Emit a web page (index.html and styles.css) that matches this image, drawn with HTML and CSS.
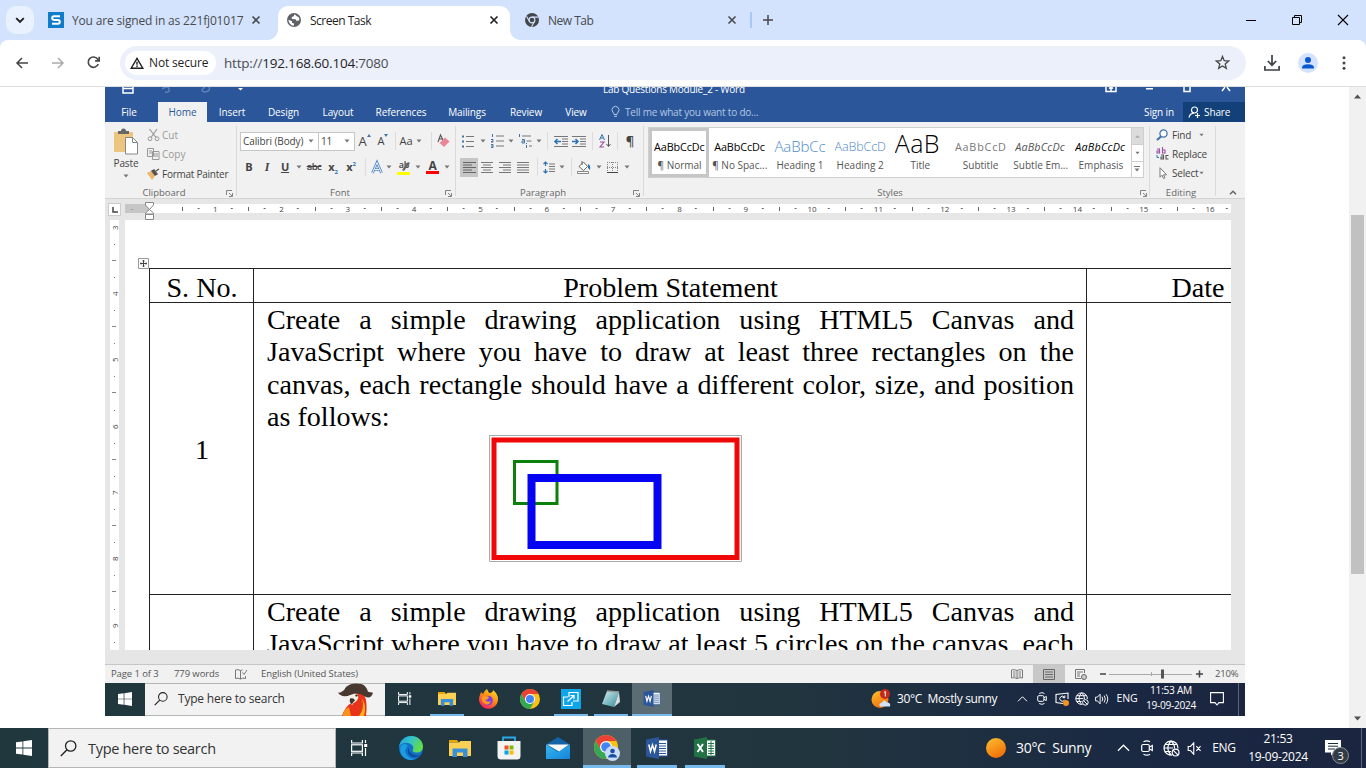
FILE: index.html
```html
<!DOCTYPE html>
<html lang="en">
<head>
<meta charset="utf-8">
<title>Screen Task</title>
<link rel="stylesheet" href="styles.css">
</head>
<body>
<svg class="defs" aria-hidden="true">
  <defs>
    <linearGradient id="gSun" x1="0" y1="0" x2=".5" y2="1"><stop offset="0" stop-color="#fbc02d"/><stop offset="1" stop-color="#f2720c"/></linearGradient>
    <linearGradient id="gEdge" x1="0" y1="0" x2="1" y2=".4"><stop offset="0" stop-color="#1e9de0"/><stop offset=".5" stop-color="#34c3c8"/><stop offset="1" stop-color="#62dc4a"/></linearGradient>
    <linearGradient id="gFox" x1=".8" y1="0" x2=".2" y2="1"><stop offset="0" stop-color="#ffe226"/><stop offset=".45" stop-color="#ff8a16"/><stop offset="1" stop-color="#f5156c"/></linearGradient>
    <linearGradient id="gMail" x1="0" y1="0" x2="1" y2="1"><stop offset="0" stop-color="#35b8f1"/><stop offset="1" stop-color="#1583d8"/></linearGradient>
    <linearGradient id="gNote" x1="0" y1="0" x2="1" y2="1"><stop offset="0" stop-color="#d9eef0"/><stop offset="1" stop-color="#2f8c9c"/></linearGradient>
  </defs>
  <symbol id="x" viewBox="0 0 10 10"><path d="M1.500 1.500l7 7M8.500 1.500l-7 7" fill="none" stroke="currentColor" stroke-width="1.600"/></symbol>
  <symbol id="caret" viewBox="0 0 6 4"><path d="M.5.500h5L3 3.500z" fill="#777"/></symbol>
  <symbol id="launch" viewBox="0 0 7 7"><path d="M.5 5V.5H6M3 3l3 3M6.500 3v3.500H3" fill="none" stroke="#777" stroke-width=".9"/></symbol>
  <symbol id="win" viewBox="0 0 16 16"><path fill="#fff" d="M0 2.300L6.500 1.400V7.600H0zM7.300 1.300L16 0v7.600H7.300zM0 8.400h6.500v6.200L0 13.700zM7.300 8.400H16V16l-8.700-1.300z"/></symbol>
  <symbol id="mag" viewBox="0 0 17 17"><circle cx="10.700" cy="6" r="5.200" fill="none" stroke="#222" stroke-width="1.300"/><path d="M7 9.800L.8 16" stroke="#222" stroke-width="1.400"/></symbol>
  <symbol id="tview" viewBox="0 0 17 16"><path d="M.6 0v3h10.800V0M.6 16v-3h10.800v3M14.500 0v3M14.500 8v8" fill="none" stroke="#fff" stroke-width="1.200"/><rect x=".6" y="4.800" width="10.800" height="6.500" fill="none" stroke="#fff" stroke-width="1.200"/><path d="M13.200 4h3v3h-3z" fill="#fff"/></symbol>
  <symbol id="folder" viewBox="0 0 22 18"><path d="M0 1h8l2 2.500H0z" fill="#e8a400"/><path d="M0 3.500h10L11.500 2H22v15H0z" fill="#fcd053"/><path d="M3.500 18V9.500h15V18H14v-4.500H8V18z" fill="#3a8fd9"/></symbol>
  <symbol id="chrome" viewBox="0 0 20 20"><circle cx="10" cy="10" r="10" fill="#fbc116"/><path d="M10 5h8.660A10 10 0 0 0 1.340 5L5.670 12.500z" fill="#ea4335"/><path d="M1.340 5A10 10 0 0 0 10 20l4.330-7.500-8.660 0z" fill="#34a853"/><circle cx="10" cy="10" r="5" fill="#fff"/><circle cx="10" cy="10" r="4" fill="#4285f4"/></symbol>
  <symbol id="word" viewBox="0 0 22 22"><path d="M11 3h10.500v16H11z" fill="#fff" stroke="#2b579a"/><path d="M13 6.500h7M13 9h7M13 11.500h7M13 14h7M13 16.500h7" stroke="#2b579a"/><path d="M0 2.500L13 0v22L0 19.500z" fill="#2b579a"/><path d="M2.800 7.500l1.700 7 2-6.500 2 6.500 1.700-7" fill="none" stroke="#fff" stroke-width="1.500"/></symbol>
  <symbol id="excel" viewBox="0 0 22 22"><path d="M11 3h10.500v16H11z" fill="#fff" stroke="#217346"/><path d="M14 6.500h6M14 9h6M14 11.500h6M14 14h6M14 16.500h6M17 4v14" stroke="#217346"/><path d="M0 2.500L13 0v22L0 19.500z" fill="#217346"/><path d="M3.500 7l5.500 8M9 7l-5.500 8" fill="none" stroke="#fff" stroke-width="1.900"/></symbol>
  <symbol id="chev" viewBox="0 0 14 8"><path d="M1 7l6-6 6 6" fill="none" stroke="#fff" stroke-width="1.300"/></symbol>
  <symbol id="cam" viewBox="0 0 12 16"><rect x=".7" y="4.500" width="7.600" height="7" rx="1.500" fill="none" stroke="#fff" stroke-width="1.200"/><path d="M8.500 7l2.800-1.500v5L8.500 9M2.500 1.800Q6-.2 9 1.800M2.500 14.200Q6 16.200 9 14.200" fill="none" stroke="#fff" stroke-width="1.200"/></symbol>
  <symbol id="globe" viewBox="0 0 17 17"><g fill="none" stroke="#fff" stroke-width="1.200"><path d="M9 15A7 7 0 1 1 15 8.500M8 1Q1.500 8 8 15M8 1Q12 4.500 11.500 8.500M1 8h9M2 4.500h12M2 11.500h6"/><circle cx="12.600" cy="12.600" r="3.400"/><path d="M10.300 10.300l4.600 4.600"/></g></symbol>
  <symbol id="mute" viewBox="0 0 15 14"><path d="M.7 4.800h2.500l3.500-4v12.400l-3.500-4H.7zM9.500 4.500l4.500 5M14 4.500l-4.500 5" fill="none" stroke="#fff" stroke-width="1.200"/></symbol>
  <symbol id="spk" viewBox="0 0 15 12"><path d="M.6 4h2L5.500.8v10.400L2.600 8h-2zM7.500 3.500q1.600 2.500 0 5M9.800 2.300q2.500 3.700 0 7.400M12 1q3.400 5 0 10" fill="none" stroke="#fff"/></symbol>
</svg>

<header class="tabstrip">
  <div class="tab-search"><svg width="10" height="7" viewBox="0 0 10 7"><path d="M1.200 1.200L5 5l3.800-3.800" fill="none" stroke="#1f1f1f" stroke-width="1.900"/></svg></div>
  <div class="tab tab-first">
    <svg width="16" height="16" viewBox="0 0 16 16"><path fill="#0f7dc8" d="M0 0h16v16H0z"/><path d="M12 4.300H6q-1.800 0-1.800 1.700T6 7.900h4q1.800 0 1.800 1.900T10 11.700H4" fill="none" stroke="#fff" stroke-width="2"/></svg>
    <span class="tab-title t-signed">You are signed in as 221fj01017</span>
    <svg class="tab-x" width="10" height="10"><use href="#x"/></svg>
  </div>
  <div class="tab tab-active">
    <svg width="14" height="14" viewBox="0 0 14 14"><circle cx="7" cy="7" r="7" fill="#5f6368"/><path d="M7.500 1.300L6.800 3.300 4.800 4v2l3.700.3 1 1.700 2.900-.7-.4-2.800-1.700-1zM1.500 6.800L5 8.300v1.500l2 .8v1.800H5Q1.500 10.500 1.500 6.800z" fill="#fff"/></svg>
    <span class="tab-title">Screen Task</span>
    <svg class="tab-x dark" width="10" height="10"><use href="#x"/></svg>
  </div>
  <div class="tab tab-new">
    <svg width="14" height="14" viewBox="0 0 14 14"><circle cx="7" cy="7" r="7" fill="#44474a"/><circle cx="7" cy="7" r="2.900" fill="none" stroke="#d3e3fd" stroke-width="1.100"/><path d="M7 4.100h6.200M4.500 8.500L1.500 3.300M9.500 8.500l-3 5.300" stroke="#d3e3fd" stroke-width="1.100"/></svg>
    <span class="tab-title">New Tab</span>
    <svg class="tab-x" width="10" height="10"><use href="#x"/></svg>
  </div>
  <i class="tab-sep"></i>
  <svg class="plus" width="10" height="10" viewBox="0 0 10 10"><path d="M5 0v10M0 5h10" stroke="#444746" stroke-width="1.500"/></svg>
  <div class="winctl">
    <svg width="10" height="10" viewBox="0 0 10 10"><path d="M0 5.500h10" stroke="#000"/></svg>
    <svg width="10" height="10" viewBox="0 0 10 10"><path d="M.5 2.500h7v7h-7zM2.500 2.500v-2h7v7h-2" fill="none" stroke="#000"/></svg>
    <svg width="10" height="10" viewBox="0 0 10 10"><path d="M0 0l10 10M10 0L0 10" stroke="#000" stroke-width="1.100"/></svg>
  </div>
</header>

<nav class="toolbar">
  <svg width="12" height="12" viewBox="0 0 12 12"><path d="M12 6H1M6 1L1 6l5 5" fill="none" stroke="#444746" stroke-width="1.500"/></svg>
  <svg width="12" height="12" viewBox="0 0 12 12"><path d="M0 6h11M6 1l5 5-5 5" fill="none" stroke="#a9abad" stroke-width="1.500"/></svg>
  <svg width="13" height="13" viewBox="0 0 13 13"><path d="M11.300 8A5.200 5.200 0 1 1 10.600 3L12 4.600M12.200.8v4.100H8.100" fill="none" stroke="#444746" stroke-width="1.600"/></svg>
  <div class="omnibox">
    <div class="chip"><svg width="14" height="12" viewBox="0 0 14 12"><path d="M7 1.300L1.200 11.200h11.600zM7 4.800v3M7 8.600v1.300" fill="none" stroke="#1f1f1f" stroke-width="1.400"/></svg><span>Not secure</span></div>
    <span class="url"><b>http://</b>192.168.60.104<b>:7080</b></span>
    <svg class="star" width="15" height="15" viewBox="0 0 15 15"><path d="M7.500 1.500l1.700 4.200 4.500.3-3.500 2.900 1.100 4.400-3.800-2.400-3.800 2.400 1.100-4.400L1.300 6l4.500-.3z" fill="none" stroke="#444746" stroke-width="1.300"/></svg>
  </div>
  <svg class="dl" width="16" height="16" viewBox="0 0 16 16"><path d="M8 0v10M3.800 6L8 10.200 12.200 6M.9 11v4h14.200v-4" fill="none" stroke="#3c4043" stroke-width="1.700"/></svg>
  <svg class="avatar" width="20" height="20" viewBox="0 0 20 20"><circle cx="10" cy="10" r="10" fill="#d3e3fd"/><circle cx="10" cy="7" r="3" fill="#0b57d0"/><path d="M4 15.500v-1.300Q4.500 11.300 10 11.200q5.500.1 6 3v1.300z" fill="#0b57d0"/></svg>
  <svg class="dots" width="4" height="14" viewBox="0 0 4 14"><g fill="#444746"><circle cx="2" cy="1.800" r="1.500"/><circle cx="2" cy="7" r="1.500"/><circle cx="2" cy="12.200" r="1.500"/></g></svg>
</nav>

<main class="viewport">
  <section class="remote">
    <div class="titlebar">
      <svg class="qat" width="130" height="7" viewBox="0 0 130 7"><path d="M1 0v6h10V0M1 1.500h10" fill="none" stroke="#fff" stroke-width="1.500"/><path d="M40 2Q46-2 47 2t-4 3M83 0q-6 4 0 5 6-1 4-5" fill="none" stroke="#5f82b8" stroke-width="1.500"/><path d="M116 1h5l-2.500 2.500z" fill="#fff"/></svg>
      <span class="doc-title">Lab Questions Module_2 - Word</span>
      <svg class="wctl" width="126" height="6" viewBox="0 0 126 6"><path d="M1 0v4.500h10V0M6 0v4M4 1.500L6 0l2 1.500M41 1.800h7M79 0v4.500h6V0M117 4l3-4M125 4l-3-4" fill="none" stroke="#fff" stroke-width="1.500"/></svg>
    </div>
    <div class="rtabs">
      <span>File</span><span class="on">Home</span><span>Insert</span><span>Design</span><span>Layout</span><span>References</span><span>Mailings</span><span>Review</span><span>View</span>
      <span class="tell"><svg width="9" height="12" viewBox="0 0 9 12"><path d="M3 8.500Q3 7 1.700 6A3.500 3.500 0 1 1 7.300 6Q6 7 6 8.500zM3 10.300h3" fill="none" stroke="#b4c7e3"/></svg>Tell me what you want to do...</span>
      <span class="signin">Sign in</span>
      <span class="share"><svg width="13" height="12" viewBox="0 0 13 12"><circle cx="6.500" cy="4" r="3" fill="none" stroke="#fff" stroke-width="1.200"/><path d="M1 11.500Q2 7.500 6 7.200M7 9.500h5M9.500 7v5" fill="none" stroke="#fff" stroke-width="1.200"/></svg>Share</span>
    </div>

    <div class="ribbon">
      <div class="group g-clip">
        <div class="clip-body">
          <div class="paste">
            <svg width="26" height="27" viewBox="0 0 26 27"><path d="M1 4h19v20H1z" fill="#ecc67f"/><path d="M5 6V3h3Q8 .5 10.500.5T13 3h3v3z" fill="#666"/><path d="M12.500 9.500h7l5 5V26h-12z" fill="#fff" stroke="#888"/><path d="M19.500 9.500v5h5" fill="none" stroke="#888"/></svg>
            <span>Paste</span><svg width="6" height="4"><use href="#caret"/></svg>
          </div>
          <div class="clip-list">
            <div class="dim"><svg width="13" height="12" viewBox="0 0 13 12"><path d="M2.500 0L9 8.500M10 0L4 8.500" stroke="#999" stroke-width="1.200"/><circle cx="3" cy="9.700" r="1.900" fill="none" stroke="#999"/><circle cx="10" cy="9.700" r="1.900" fill="none" stroke="#999"/></svg>Cut</div>
            <div class="dim"><svg width="13" height="12" viewBox="0 0 13 12"><path d="M.5.500h6v8h-6zM5.500 3.500h6.500v8H5.500zM2 3h3M2 5h3M7 6h4M7 8h4" fill="none" stroke="#999"/></svg>Copy</div>
            <div class="fp"><svg width="13" height="12" viewBox="0 0 13 12"><path d="M0 5l4-2 4 5-3 4z" fill="#eeb868"/><path d="M5 3l3 4 2-1-3-4zM9 3l3-2" stroke="#555" stroke-width="1.400" fill="#555"/></svg>Format Painter</div>
          </div>
        </div>
        <div class="glabel"><span>Clipboard</span><svg width="7" height="7"><use href="#launch"/></svg></div>
      </div>

      <div class="group g-font">
        <div class="row font1">
          <span class="combo">Calibri (Body)<svg width="6" height="4"><use href="#caret"/></svg></span>
          <span class="combo">11<svg width="6" height="4"><use href="#caret"/></svg></span>
          <span class="grow">A<svg width="4" height="4" viewBox="0 0 4 4"><path d="M0 3l2-3 2 3z" fill="#4472a8"/></svg></span>
          <span class="shrink">A<svg width="4" height="4" viewBox="0 0 4 4"><path d="M0 0l2 3 2-3z" fill="#4472a8"/></svg></span>
          <i class="vs"></i>
          <span class="aa">Aa<svg width="6" height="4"><use href="#caret"/></svg></span>
          <i class="vs"></i>
          <svg width="13" height="14" viewBox="0 0 13 14"><path d="M1 8l2.500-7L6 6M2 5h3" fill="none" stroke="#555" stroke-width="1.100"/><path d="M2.500 9L8 3.500l4.500 4L7 13z" fill="#ea8797"/></svg>
        </div>
        <div class="row font2">
          <b>B</b><i class="it">I</i><u>U</u><svg width="6" height="4"><use href="#caret"/></svg>
          <s>abc</s><span class="bx">x<sub>2</sub></span><span class="bx">x<sup>2</sup></span><i class="vs"></i>
          <svg width="12" height="13" viewBox="0 0 12 13"><path d="M1.500 12L6 1.500 10.500 12M3.500 8.500h5" fill="none" stroke="#4d86c4" stroke-width="2.600"/><path d="M1.500 12L6 1.500 10.500 12M3.500 8.500h5" fill="none" stroke="#fff" stroke-width=".9"/></svg>
          <svg width="6" height="4"><use href="#caret"/></svg>
          <span class="hl">ab<svg width="14" height="14" viewBox="0 0 14 14"><path d="M5 9l6-8 2 1-6 8z" fill="#666"/><path d="M0 11h13v3H0z" fill="#ff0"/></svg></span>
          <svg width="6" height="4"><use href="#caret"/></svg>
          <span class="fc">A</span>
          <svg width="6" height="4"><use href="#caret"/></svg>
        </div>
        <div class="glabel"><span>Font</span><svg width="7" height="7"><use href="#launch"/></svg></div>
      </div>

      <div class="group g-para">
        <div class="row para1">
          <svg width="12" height="13" viewBox="0 0 12 13"><path d="M0 1.500h2M0 6.500h2M0 11.500h2" stroke="#4472a8" stroke-width="2"/><path d="M4 1.500h8M4 6.500h8M4 11.500h8" stroke="#777"/></svg>
          <svg width="6" height="4"><use href="#caret"/></svg>
          <svg width="13" height="14" viewBox="0 0 13 14"><path d="M1.500 0v3M0 5.500h2v1.500l-2 1h2.500M0 10.500h2v3H0M2 12H0" fill="none" stroke="#4472a8"/><path d="M5 2h8M5 7h8M5 12h8" stroke="#777"/></svg>
          <svg width="6" height="4"><use href="#caret"/></svg>
          <svg width="14" height="14" viewBox="0 0 14 14"><path d="M1.500 0v3M4 5.500h2.500V9H4V7h2M8.500 9v1M8.500 11v3" fill="none" stroke="#4472a8"/><path d="M4 2h9M8.500 7h5M11 12h3" stroke="#777"/></svg>
          <svg width="6" height="4"><use href="#caret"/></svg>
          <i class="vs"></i>
          <svg width="14" height="11" viewBox="0 0 14 11"><path d="M0 .5h14M8 3h6M8 5.500h6M8 8h6M0 10.500h14" stroke="#777"/><path d="M7 5.500H1M3.500 3L1 5.500 3.500 8" fill="none" stroke="#2e75b6" stroke-width="1.600"/></svg>
          <svg width="14" height="11" viewBox="0 0 14 11"><path d="M0 .5h14M8 3h6M8 5.500h6M8 8h6M0 10.500h14" stroke="#777"/><path d="M0 5.500h6M3.500 3L6 5.500 3.500 8" fill="none" stroke="#2e75b6" stroke-width="1.600"/></svg>
          <i class="vs"></i>
          <svg width="12" height="14" viewBox="0 0 12 14"><path d="M.5 6L3 .5 5.500 6M1.500 4h3" fill="none" stroke="#2e75b6"/><path d="M1 8h4L1 13h4" fill="none" stroke="#9b4fa5" stroke-width="1.100"/><path d="M9.500 1v11M7.500 10l2 2.500 2-2.500" fill="none" stroke="#555"/></svg>
          <i class="vs"></i>
          <span class="pil">¶</span>
        </div>
        <div class="row para2">
          <span class="sel"><svg width="13" height="11" viewBox="0 0 13 11"><path d="M0 .5h13M0 3h9M0 5.500h13M0 8h9M0 10.500h13" stroke="#666"/></svg></span>
          <svg width="12" height="11" viewBox="0 0 12 11"><path d="M0 .5h12M2 3h8M0 5.500h12M2 8h8M0 10.500h12" stroke="#777"/></svg>
          <svg width="12" height="11" viewBox="0 0 12 11"><path d="M0 .5h12M4 3h8M0 5.500h12M4 8h8M0 10.500h12" stroke="#777"/></svg>
          <svg width="12" height="11" viewBox="0 0 12 11"><path d="M0 .5h12M0 3h12M0 5.500h12M0 8h12M0 10.500h12" stroke="#777"/></svg>
          <i class="vs"></i>
          <svg width="12" height="13" viewBox="0 0 12 13"><path d="M2.500 1v4M.5 3l2-2 2 2M2.500 8v4M.5 10l2 2 2-2" fill="none" stroke="#2e75b6" stroke-width="1.200"/><path d="M6 3h6M6 5.500h6M6 8h6M6 10.500h6" stroke="#777"/></svg>
          <svg width="6" height="4"><use href="#caret"/></svg>
          <i class="vs"></i>
          <svg width="14" height="13" viewBox="0 0 14 13"><path d="M2 5.500L6.500 1l4 4.500-4 4z" fill="#fff" stroke="#666"/><path d="M5 0v4" stroke="#666"/><path d="M11 3q3 1 2 6l-2-2z" fill="#2e75b6"/><path d="M.5 10.500h11v2H.5z" fill="#fff" stroke="#888"/></svg>
          <svg width="6" height="4"><use href="#caret"/></svg>
          <svg width="11" height="11" viewBox="0 0 11 11"><path d="M.5 0v10M5.500 0v10M10.500 0v10M0 .5h11M0 5.500h11" stroke="#888" stroke-dasharray="1 1"/><path d="M0 10.500h11" stroke="#444"/></svg>
          <svg width="6" height="4"><use href="#caret"/></svg>
        </div>
        <div class="glabel"><span>Paragraph</span><svg width="7" height="7"><use href="#launch"/></svg></div>
      </div>

      <div class="group g-styles">
        <div class="gallery">
          <div class="sty chosen"><span>AaBbCcDc</span><em>¶ Normal</em></div>
          <div class="sty"><span>AaBbCcDc</span><em>¶ No Spac...</em></div>
          <div class="sty h1"><span>AaBbCc</span><em>Heading 1</em></div>
          <div class="sty h2"><span>AaBbCcD</span><em>Heading 2</em></div>
          <div class="sty ttl"><span>AaB</span><em>Title</em></div>
          <div class="sty sub"><span>AaBbCcD</span><em>Subtitle</em></div>
          <div class="sty ital"><span>AaBbCcDc</span><em>Subtle Em...</em></div>
          <div class="sty emph"><span>AaBbCcDc</span><em>Emphasis</em></div>
          <div class="gscroll">
            <span class="off"><svg width="5" height="4" viewBox="0 0 6 4"><path d="M0 4l3-3 3 3z" fill="#aaa"/></svg></span>
            <span><svg width="5" height="4"><use href="#caret"/></svg></span>
            <span><svg width="6" height="6" viewBox="0 0 6 6"><path d="M0 .5h6" stroke="#777"/><path d="M.5 2.500h5L3 5.500z" fill="#777"/></svg></span>
          </div>
        </div>
        <div class="glabel"><span>Styles</span><svg width="7" height="7"><use href="#launch"/></svg></div>
      </div>

      <div class="group g-edit">
        <div class="edit-list">
          <div><svg width="12" height="12" viewBox="0 0 12 12"><circle cx="7.500" cy="4.500" r="3.600" fill="#fff" stroke="#4472a8" stroke-width="1.300"/><path d="M5 7.500L1 11" stroke="#4472a8" stroke-width="2.200"/></svg><span>Find</span><svg class="c1" width="5" height="4"><use href="#caret"/></svg></div>
          <div><svg width="13" height="13" viewBox="0 0 13 13"><path d="M1 2h2.500v4H1V4h2M6.500 0v6H9V3H6.500" fill="none" stroke="#9b4fa5" stroke-width="1.100"/><path d="M5 8h2.500v4H5v-2h2M12.500 8.500H10V12h2.500" fill="none" stroke="#555" stroke-width="1.100"/><path d="M1 8v2.500h2" fill="none" stroke="#2e75b6"/></svg><span>Replace</span></div>
          <div><svg width="12" height="12" viewBox="0 0 12 12"><path d="M4 .7v9.500l2-2 1.500 3.300 1.500-.7-1.500-3h3z" fill="#fff" stroke="#777"/></svg><span>Select</span><svg class="c2" width="5" height="4"><use href="#caret"/></svg></div>
        </div>
        <div class="glabel"><span>Editing</span></div>
      </div>
      <svg class="collapse" width="8" height="5" viewBox="0 0 8 5"><path d="M1 4.200l3-3 3 3" fill="none" stroke="#666" stroke-width="1.500"/></svg>
    </div>

    <div class="hruler-bar">
      <span class="tabsel"><svg width="6" height="6" viewBox="0 0 6 6"><path d="M1 0v5h5" fill="none" stroke="#444" stroke-width="1.500"/></svg></span>
      <div class="hruler">
        <span class="hmargin">·<svg class="indent" width="9" height="18" viewBox="0 0 9 18"><path d="M.5.500h8v2.500L4.500 7.500.500 3zM4.500 7.500l4 3.500v1H.5v-1zM.5 12.500h8v5h-8z" fill="#fff" stroke="#888"/></svg></span>
        <div class="inches">
          <span>1</span><span>2</span><span>3</span><span>4</span><span>5</span><span>6</span><span>7</span><span>8</span><span>9</span><span>10</span><span>11</span><span>12</span><span>13</span><span>14</span><span>15</span><span>16</span><span></span>
        </div>
      </div>
    </div>

    <div class="workspace">
      <div class="vruler"><span>3</span><span>4</span><span>5</span><span>6</span><span>7</span><span>8</span><span>9</span></div>
      <article class="page">
        <svg class="handle" width="11" height="11" viewBox="0 0 11 11"><path d="M.5.500h10v10H.5z" fill="#fff" stroke="#999"/><path d="M5.500 2v7M2 5.500h7M4.500 3h2M4.500 8h2M3 4.500v2M8 4.500v2" stroke="#444" fill="none"/></svg>
        <div class="sheet">
          <div class="cell mid head">S. No.</div><div class="cell mid head">Problem Statement</div><div class="cell mid head">Date</div>
          <div class="cell mid num">1</div>
          <div class="cell body">
            <p class="j">Create a simple drawing application using HTML5 Canvas and</p>
            <p class="j">JavaScript where you have to draw at least three rectangles on the</p>
            <p class="j">canvas, each rectangle should have a different color, size, and position</p>
            <p>as follows:</p>
            <svg class="figure" width="253" height="127" viewBox="0 0 253 127"><path d="M.5.500h252v126H.5z" fill="#fff" stroke="#aaa"/><path d="M5 5h243v117.500H5z" fill="none" stroke="#f00808" stroke-width="5"/><path d="M25.500 26.500h42.500v42H25.500z" fill="none" stroke="#0b800b" stroke-width="3"/><path d="M42.500 43h126v67h-126z" fill="none" stroke="#0404f2" stroke-width="8"/></svg>
          </div>
          <div class="cell"></div>
          <div class="cell"></div>
          <div class="cell body">
            <p class="j">Create a simple drawing application using HTML5 Canvas and</p>
            <p class="j">JavaScript where you have to draw at least 5 circles on the canvas, each</p>
          </div>
          <div class="cell"></div>
        </div>
      </article>
    </div>

    <div class="status">
      <span>Page 1 of 3</span><span>779 words</span>
      <svg width="12" height="11" viewBox="0 0 12 11"><path d="M5.500 1.500Q3 0 .5 1v8.500q2.500-1 5 .5 2-1.500 5-.5V7M5.500 1.500V10M5.500 1.500L7.500 1M7.500 3.500l1.500 2L12 1" fill="none" stroke="#777"/></svg>
      <span>English (United States)</span>
      <svg class="mode" width="12" height="10" viewBox="0 0 12 10"><path d="M6 1.500Q3 0 .5 1v8q3-1 5.500.5Q8.500 8 11.500 9V1Q9 0 6 1.500zV10M2 3h2.500M2 5h2.500M2 7h2.500M7.500 3H10M7.500 5H10M7.500 7H10" fill="none" stroke="#777"/></svg>
      <span class="mode-on"><svg width="12" height="11" viewBox="0 0 12 11"><path d="M.5.500h11v10H.5zM2 3h8M2 5.500h8M2 8h8" fill="none" stroke="#666"/></svg></span>
      <svg class="mode" width="12" height="11" viewBox="0 0 12 11"><path d="M6 9.500H.5v-9h9V4M2 3h6M2 5h3M2 7h3" fill="none" stroke="#777"/><circle cx="9" cy="8" r="2.500" fill="#ccc" stroke="#666"/></svg>
      <svg class="zoombar" width="104" height="10" viewBox="0 0 104 10"><path d="M0 5h6M96 5h7M99.500 1.500v7" stroke="#444" stroke-width="1.500"/><path d="M9 5.500h83M51.500 3v4" stroke="#aaa"/><path d="M61 .5h3v9h-3z" fill="#555"/></svg>
      <span class="pct">210%</span>
    </div>

    <footer class="tbar inner">
      <svg width="14" height="14"><use href="#win"/></svg>
      <div class="search"><svg width="14" height="14"><use href="#mag"/></svg><span>Type here to search</span>
        <svg class="parrot" width="36" height="33" viewBox="0 0 36 34" preserveAspectRatio="none"><path d="M4 34Q7 24 14 20l1-8q6-5 11 0 4 7 2 22z" fill="#e8341c"/><path d="M5 34q0-7 6-9l2 9z" fill="#f7941d"/><path d="M24 16q5 8 2 18h-5q6-8 3-18z" fill="#fbb01b"/><path d="M13 14q1-4 6-3 3 4-1 8-3 1-4 4-3-4-1-9z" fill="#f5efe0"/><path d="M12 16q4-1 5 2-2 1-3 4-3-2-2-6z" fill="#3d3430"/><circle cx="18.500" cy="13" r="1.200" fill="#222"/><path d="M0 10Q5 10 8 4q6-5 15-3 5 1 7 8l5 1q-2 7-8 4-6-5-14-2-9 4-13-2z" fill="#49382f"/></svg>
      </div>
      <svg width="14" height="13"><use href="#tview"/></svg>
      <span class="app run"><svg width="18" height="15"><use href="#folder"/></svg></span>
      <svg width="20" height="20" viewBox="0 0 20 20"><path d="M2 6l1-3 2 2q1-3 4-5l2 4q4 0 4-3 5 4 5 9a9.500 9.500 0 1 1-18-4z" fill="url(#gFox)"/><circle cx="10" cy="11.500" r="4.800" fill="#7b3fe4"/><path d="M4 8q4-2 7 0-1 3-4 3 3 3 6 1-2 5-6 3-4-2-3-7z" fill="#ff9a1e"/></svg>
      <svg width="20" height="20"><use href="#chrome"/></svg>
      <span class="app run"><svg width="20" height="20" viewBox="0 0 20 20"><path d="M0 0h20v20H0z" fill="#0ea5e9"/><path d="M8 8V3.500h9V12h-5M7 8H2.500v8.500h8.500V13M6.500 12.500L13 6.500M9.500 6.500H13V10" fill="none" stroke="#fff" stroke-width="1.200"/></svg></span>
      <span class="app run"><svg width="20" height="18" viewBox="0 0 20 18"><path d="M6 1l12 1-5 15-12-3z" fill="url(#gNote)"/><path d="M18 2l1 10-6 5z" fill="#d8dde0"/><path d="M6 1l12 1" stroke="#999" stroke-width="1.500"/></svg></span>
      <span class="app run on"><svg width="18" height="17"><use href="#word"/></svg></span>
      <i></i>
      <svg width="20" height="20" viewBox="0 0 20 20"><circle cx="9" cy="10.500" r="8.500" fill="url(#gSun)"/><path d="M9 17.500q-2-3 2-4 2-4 5 0 4 0 3 4z" fill="#cfe2f8"/><circle cx="14" cy="5" r="5" fill="#c42b1c"/><path d="M13 3.500l1.300-1v5" fill="none" stroke="#fff"/></svg>
      <span class="weather">30°C&nbsp; Mostly sunny</span>
      <svg width="11" height="6"><use href="#chev"/></svg>
      <svg width="10" height="13"><use href="#cam"/></svg>
      <svg width="14" height="14" viewBox="0 0 14 14"><path d="M8 11.500L1 10.500v-8l12-1.500v6" fill="none" stroke="#fff" stroke-width="1.100"/><path d="M9.500 5.500a2.500 2.500 0 1 0 0 2.500M9.800 3.500v2.200H7.500" fill="none" stroke="#fff"/><circle cx="11" cy="11" r="3" fill="#f7921e"/></svg>
      <svg width="14" height="14"><use href="#globe"/></svg>
      <svg width="14" height="12"><use href="#spk"/></svg>
      <span class="eng">ENG</span>
      <div class="clock"><span>11:53 AM</span><span>19-09-2024</span></div>
      <svg width="14" height="14" viewBox="0 0 14 14"><path d="M.6.600h12.800v10H9L7 13l-2-2.400H.6z" fill="none" stroke="#fff" stroke-width="1.100"/></svg>
      <i class="peek"></i>
    </footer>
  </section>

  <aside class="scroll">
    <svg width="7" height="5" viewBox="0 0 7 5"><path d="M0 4.500l3.500-4 3.500 4z" fill="#505050"/></svg>
    <i class="thumb"></i>
    <svg width="7" height="5" viewBox="0 0 7 5"><path d="M0 .5l3.500 4 3.500-4z" fill="#505050"/></svg>
  </aside>
</main>

<footer class="tbar outer">
  <svg width="16" height="16"><use href="#win"/></svg>
  <div class="search"><svg width="17" height="17"><use href="#mag"/></svg><span>Type here to search</span></div>
  <svg width="17" height="16"><use href="#tview"/></svg>
  <svg width="24" height="24" viewBox="0 0 24 24"><circle cx="12" cy="12" r="12" fill="#1272c9"/><path d="M.2 10.500C1 4.500 6 0 12 0c7 0 12 5 12 10.500 0 4-3 6-6 6-4 0-5-1.500-4-3 .5-1 .5-3-1-4.500C9 5.500 2.500 6.500.2 10.500z" fill="url(#gEdge)"/><path d="M9 9.500q-5 5-1 10 4 4.500 10 3-9 4-15-3-3-5-1-10 3-3 7 0z" fill="#1b9de2"/><path d="M9.500 11.500q-2.500 6 3 9 5 2 9.500-2-5 2-9-.500-3-2-3.500-6.500z" fill="#0d4a9c"/></svg>
  <svg width="22" height="18"><use href="#folder"/></svg>
  <svg width="24" height="24" viewBox="0 0 24 24"><path d="M6 5V1.500h12V5" fill="none" stroke="#29a9e8" stroke-width="1.800"/><path d="M.5 5h23v15q0 3.500-3.500 3.500H4Q.5 23.500.5 20z" fill="#f3f3f3"/><path d="M7.500 9.500h4v4h-4z" fill="#f25022"/><path d="M12.500 9.500h4v4h-4z" fill="#7fba00"/><path d="M7.500 14.500h4v4h-4z" fill="#00a4ef"/><path d="M12.500 14.500h4v4h-4z" fill="#ffb900"/></svg>
  <svg width="24" height="22" viewBox="0 0 24 22"><path d="M0 7.500L12 0l12 7.500V22H0z" fill="#1263a8"/><path d="M0 7.500L12 15l12-7.500V22H0z" fill="url(#gMail)"/><path d="M1 7.500h22L13 14.500z" fill="#f5f7f9"/></svg>
  <i></i>
  <span class="app run on"><svg width="26" height="26" viewBox="0 0 26 26"><use href="#chrome" width="24" height="24"/><circle cx="18.500" cy="18.500" r="7.500" fill="#c9dcfb"/><circle cx="18.500" cy="16" r="2.300" fill="#174ea6"/><path d="M14 22.500q.5-3.500 4.500-3.500t4.500 3.500z" fill="#174ea6"/></svg></span>
  <span class="app run"><svg width="22" height="22"><use href="#word"/></svg></span>
  <span class="app run"><svg width="22" height="22"><use href="#excel"/></svg></span>
  <i></i>
  <svg width="20" height="20" viewBox="0 0 20 20"><circle cx="10" cy="10" r="10" fill="url(#gSun)"/></svg>
  <span class="weather">30°C&nbsp; Sunny</span>
  <svg width="13" height="8"><use href="#chev"/></svg>
  <svg width="12" height="16"><use href="#cam"/></svg>
  <svg width="17" height="17"><use href="#globe"/></svg>
  <svg width="15" height="13"><use href="#mute"/></svg>
  <span class="eng">ENG</span>
  <div class="clock"><span>21:53</span><span>19-09-2024</span></div>
  <div class="notif"><svg width="16" height="16" viewBox="0 0 16 16"><path d="M0 0h16v12.500H9L6 15.500v-3H0z" fill="#fff"/><path d="M3 3.500h10M3 6.200h10M3 9h7" stroke="#1c2b3f"/></svg><span class="badge">3</span></div>
  <i class="peek"></i>
</footer>
</body>
</html>
```
FILE: styles.css
```css
* { box-sizing: border-box; }
html, body { height: 100%; overflow: hidden; }
body {
  margin: 0; width: 1366px; height: 768px; background: #fff; color: #1f1f1f;
  font: 12px/16px "Open Sans", "Noto Sans", sans-serif; white-space: nowrap;
  display: flex; flex-direction: column;
}
svg { display: block; flex: none; overflow: visible; }
.defs { position: absolute; width: 0; height: 0; }
p { margin: 0; }

/* browser tab strip */
.tabstrip { height: 40px; flex: none; background: #d3e3fd; display: flex; align-items: center; padding-left: 6px; }
.tab-search { width: 28px; height: 28px; border-radius: 10px; background: #e9f0fe; display: grid; place-items: center; }
.tab { display: flex; align-items: center; height: 34px; align-self: flex-end; padding-bottom: 6px; color: #474a4e; }
.tab-title { margin-left: 8px; flex: 1; letter-spacing: -.5px; padding-top: 1px; }
.t-signed { letter-spacing: -.17px; }
.tab-x { color: #474a4e; }
.tab-x.dark { color: #1f1f1f; }
.tab-first { width: 213px; margin-left: 14px; }
.tab-active { width: 232px; margin-left: 17px; padding: 0 11px 6px 9px; background: #fff; border-radius: 10px 10px 0 0; color: #1f1f1f; position: relative; }
.tab-active .tab-title, .tab-new .tab-title { margin-left: 9px; }
.tab-active::before, .tab-active::after { content: ""; position: absolute; bottom: 0; width: 10px; height: 10px; }
.tab-active::before { left: -10px; background: radial-gradient(circle at 0 0, transparent 9.500px, #fff 10px); }
.tab-active::after { right: -10px; background: radial-gradient(circle at 100% 0, transparent 9.500px, #fff 10px); }
.tab-new { width: 212px; margin-left: 15px; }
.tab-sep { width: 2px; height: 16px; background: #a8c7fa; margin-left: 13px; }
.plus { margin-left: 11px; }
.winctl { margin-left: auto; display: flex; gap: 36px; padding-right: 18px; }

/* address bar */
.toolbar { height: 47px; flex: none; background: linear-gradient(#d3e3fd 10px, #fff 10px); display: flex; align-items: center; padding: 0 20px 1px 16px; position: relative; border-bottom: 1px solid #dedede; }
.toolbar::before { content: ""; position: absolute; inset: 0 0 auto; height: 12px; background: #fff; border-radius: 8px 8px 0 0; }
.toolbar > * { position: relative; }
.toolbar > svg:nth-child(2) { margin-left: 24px; }
.toolbar > svg:nth-child(3) { margin-left: 23px; }
.omnibox { margin-left: 20px; width: 1126px; height: 34px; border-radius: 17px; background: #ecf0fa; display: flex; align-items: center; padding: 0 16px 0 5px; }
.chip { width: 91px; height: 24px; border-radius: 12px; background: #fff; display: flex; align-items: center; padding-left: 5px; gap: 5px; letter-spacing: -.15px; }
.url { margin-left: 8px; flex: 1; font-size: 13.500px; letter-spacing: -.2px; }
.url b { font-weight: 400; color: #4a4d52; }
.dl { margin-left: 18px; }
.avatar { margin-left: 18px; }
.dots { margin-left: 24px; }

/* page content */
.viewport { height: 641px; flex: none; display: flex; padding-left: 105px; }
.remote { width: 1140px; height: 629px; background: #e6e6e6; display: flex; flex-direction: column; overflow: hidden; font-size: 10px; line-height: 14px; color: #444; letter-spacing: -.1px; }
.scroll { margin-left: auto; width: 17px; background: #f1f1f1; display: flex; flex-direction: column; align-items: center; padding: 7px 0; }
.thumb { width: 13px; height: 359px; margin: 116px 0 auto; background: #c1c1c1; }

.titlebar { height: 15px; flex: none; background: #2b579a; display: flex; align-items: flex-start; overflow: hidden; color: #fff; }
.qat { margin-left: 17px; }
.doc-title { width: 142px; margin: -5px 0 0 351px; letter-spacing: -.24px; }
.wctl { margin-left: auto; margin-right: 14px; }
.rtabs { height: 20px; flex: none; background: #2b579a; color: #fff; display: grid; line-height: 21px; text-align: center;
  grid-template: 20px / 48px 54px 50px 53px 56px 70px 62px 56px 44px 537px 48px 1fr; }
.rtabs .on { background: #f1f1f1; color: #2b579a; margin: 0 0 0 5px; }
.tell { color: #b4c7e3; display: flex; align-items: center; gap: 5px; padding-left: 13px; letter-spacing: -.2px; }
.signin { letter-spacing: -.15px; }
.share { background: #124078; display: flex; align-items: center; gap: 3px; padding-left: 5px; }

/* ribbon */
.ribbon { height: 77px; flex: none; background: #f1f1f1; display: flex; border-bottom: 1px solid #d4d4d4; }
.group { position: relative; display: flex; flex-direction: column; border-right: 1px solid #dadada; margin: 4px 0; height: 70px; }
.glabel { margin-top: auto; height: 14px; margin-bottom: -4px; display: flex; align-items: center; color: #666; padding-right: 3px; letter-spacing: 0; font-size: 9.500px; }
.glabel span { flex: 1; text-align: center; padding-right: 5px; }
.row { display: grid; justify-items: center; align-items: center; height: 26px; }
.vs { width: 1px; height: 18px; background: #dcdcdc; }
.g-clip { width: 132px; }
.g-clip .glabel span { padding: 0 3px 0 0; }
.clip-body { display: flex; }
.paste { width: 42px; display: flex; flex-direction: column; align-items: center; padding-top: 2px; }
.paste span { margin-top: 1px; }
.paste svg:last-child { margin-top: 4px; }
.clip-list { display: grid; grid-auto-rows: 19.500px; margin-top: -1px; }
.clip-list div { display: flex; align-items: center; gap: 2px; letter-spacing: 0; }
.clip-list .fp { letter-spacing: -.25px; }
.dim { color: #999; }
.g-font { width: 219px; padding-left: 3px; }
.g-para { width: 188px; padding-left: 2px; }
.font1, .para1 { margin-top: 2px; }
.font1 { grid-template-columns: 79px 36px 19px 18px 6px 26px 14px 11px; }
.combo { width: 100%; height: 19px; background: #fff; border: 1px solid #c6c6c6; display: flex; align-items: center; justify-content: space-between; padding: 0 4px 0 2px; }
.combo + .combo { border-left: 0; }
.grow, .shrink { display: flex; align-items: flex-start; font-size: 13px; }
.shrink { font-size: 11px; }
.aa { display: flex; align-items: center; gap: 4px; font-size: 11px; }
.font2 { grid-template-columns: 18px 18px 18px 10px 20px 18px 18px 10px 14px 10px 20px 8px 21px 8px; font-size: 11px; }
.it { font-family: "Liberation Serif", serif; font-weight: 700; font-size: 12px; }
.font2 u { font-weight: 700; }
.font2 s { font-weight: 600; font-size: 9.500px; letter-spacing: -.5px; }
.bx { font-weight: 700; }
.bx sub, .bx sup { font-size: 6px; line-height: 0; color: #2e75b6; }
.hl { font-size: 9px; font-weight: 600; line-height: 10px; display: grid; place-items: start center; }
.hl svg { margin-top: -9px; }
.fc { border-bottom: 3px solid #f00; width: 13px; line-height: 11px; text-align: center; font-weight: 700; font-size: 12px; }
.para1 { grid-template-columns: 20px 9px 20px 8px 20px 7px 10px 18px 18px 8px 18px 7px 18px; }
.para2 { padding-left: 2px; grid-template-columns: 18px 18px 18px 18px 10px 14px 12px 6px 20px 9px 18px 12px; }
.sel { background: #c6c6c6; width: 18px; height: 19px; display: grid; place-items: center; }
.pil { font-size: 13px; font-weight: 600; }
.g-styles { width: 506px; padding-left: 4px; }
.g-styles .glabel { padding-right: 2px; }
.g-styles .glabel span { padding-right: 8px; }
.gallery { height: 51px; margin-right: 5px; margin-top: 1px; border: 1px solid #cfcfcf; background: #fff; display: grid; grid-template-columns: repeat(8, 60.200px) 1fr; }
.sty { padding: 0 4px 0 5px; text-align: center; display: grid; grid-template-rows: 29px 18px; overflow: hidden; letter-spacing: -.1px; }
.sty span { overflow: hidden; color: #000; font-size: 10.800px; line-height: 37px; text-align: left; }
.sty em { font-style: normal; margin: 0 -6px; color: #555; letter-spacing: 0; line-height: 16px; }
.sty.chosen { border: 3px solid #c6c6c6; padding: 0 1px 0 2px; grid-template-rows: 26px 18px; }
.sty.chosen span { line-height: 31px; }
.h1 span { font-size: 15px; color: #4d8ac8; font-weight: 300; }
.h2 span { font-size: 12.500px; color: #4d8ac8; font-weight: 300; }
.ttl span { font-size: 25px; line-height: 17px; font-weight: 300; margin-top: 7px; letter-spacing: .4px; }
.sub span { color: #777; letter-spacing: .8px; }
.ital span { font-style: italic; color: #555; letter-spacing: .2px; }
.emph span { font-style: italic; letter-spacing: .2px; }
.gscroll { border-left: 1px solid #cfcfcf; display: grid; grid-template-rows: 1fr 1fr 1fr; }
.gscroll span { display: grid; place-items: center; }
.gscroll span + span { border-top: 1px solid #cfcfcf; }
.gscroll .off { background: #dcdcdc; }
.g-edit { width: 66px; }
.g-edit .glabel span { padding-right: 0; }
.edit-list { display: grid; grid-auto-rows: 19.300px; margin-top: -1px; padding-left: 6px; }
.edit-list div { display: grid; grid-template-columns: 13px auto auto 1fr; align-items: center; column-gap: 3px; letter-spacing: -.2px; }
.edit-list .c1 { margin-left: 5px; }
.edit-list .c2 { margin-left: -2px; }
.collapse { margin: 68px 0 0 13px; }

/* rulers and page */
.hruler-bar { height: 21px; flex: none; display: flex; padding-top: 5px; }
.tabsel { width: 11px; height: 11px; margin-left: 4px; background: #fff; display: grid; place-items: center; box-shadow: 0 0 0 1px #ccc; }
.hruler { width: 1106px; margin-left: 5px; height: 9px; display: flex; background: #fff; font-size: 8px; line-height: 9px; overflow: visible; }
.hmargin { width: 24px; background: #c6c6c6; text-align: center; position: relative; padding-right: 10px; }
.indent { position: absolute; right: -5px; top: -2px; z-index: 1; }
.inches { width: 1082px; display: grid; grid-template-columns: repeat(17, 66.330px); overflow: hidden; padding-left: 33px; }
.inches span { text-align: center; letter-spacing: 0;
  background: radial-gradient(circle, #666 .8px, transparent 1px) 0 0/33.200px 9px, linear-gradient(#666, #666) 0 3px/1px 4px no-repeat; }
.inches span:last-child { font-size: 0; }
.workspace { height: 444px; flex: none; display: flex; }
.vruler { width: 9px; height: 430px; margin: 0 6px 0 5px; background: #fff; overflow: hidden; display: grid; grid-auto-rows: 66.400px; font-size: 8px; line-height: 9px; align-content: start; }
.vruler span { writing-mode: vertical-rl; transform: rotate(180deg); text-align: center; width: 9px; margin-top: -25.500px; height: 66px;
  background: linear-gradient(#888, #888) 3px 0/4px 1px no-repeat, radial-gradient(circle at 4.500px 16.500px, #777 .7px, transparent 1px), radial-gradient(circle at 4.500px 49.500px, #777 .7px, transparent 1px); }
.page { width: 1106px; height: 430px; background: #fff; overflow: hidden; padding: 48px 0 0 24px; position: relative; color: #000; font: 28.100px/32.300px "Liberation Serif", "Times New Roman", serif; letter-spacing: 0; }
.handle { position: absolute; left: 13px; top: 38px; }
.sheet { width: 1160px; display: grid; grid-template-columns: 104px 833px 222px; grid-template-rows: 34px 292px 292px; border-left: 1px solid #222; border-top: 1px solid #222; }
.cell { border-right: 1px solid #222; border-bottom: 1px solid #222; overflow: hidden; }
.mid { display: grid; place-items: center; padding: 3px 0 0 1px; }
.body { padding: 1px 12px 0 13px; }
.j { text-align: justify; text-align-last: justify; }
.figure { margin: 2px 0 0 222px; }

.status { height: 19px; flex: none; background: #f1f1f1; border-top: 1px solid #c6c6c6; display: grid; align-items: center; padding-left: 6px; font-size: 9.500px; color: #555; letter-spacing: -.1px;
  grid-template-columns: 63px 61px 26px 740px 32px 32px 32px 14px 101px 1fr; }
.status > :nth-child(4) { letter-spacing: -.08px; }
.mode { justify-self: center; }
.mode-on { height: 18px; background: #c8c8c8; display: grid; place-items: center; }
.zoombar { grid-column: 8 / 10; margin-left: 3px; }
.pct { padding-left: 3px; letter-spacing: -.2px; }

/* taskbars */
.tbar { flex: none; color: #fff; display: grid; align-items: center; justify-items: center; background: linear-gradient(90deg, #20373e, #21353f 60%, #1a2843 85%, #1b2540); }
.inner { height: 33px; line-height: 15px; font-size: 12px; letter-spacing: -.2px;
  grid-template: 33px / 40px 240px 40px 44px 38px 45px 37px 43px 40px 195px 28px 115px 24px 16px 24px 16px 24px 26px 62px 30px 1fr; }
.inner > svg, .inner > .eng, .inner > .weather { margin-bottom: 2px; }
.outer { height: 40px; font-size: 14px; letter-spacing: -.3px;
  grid-template: 40px / 48px 288px 47px 56px 42px 55px 44px 3px 48px 51px 46px 257px 22px 103px 26px 22px 26px 20px 40px 68px 45px 1fr; }
.search { width: 100%; height: 100%; background: #f2f2f2; border: 1px solid #b5b5b5; color: #333; display: flex; align-items: center; }
.outer .search { padding: 1px 0 0 11px; gap: 11px; font-size: 14.500px; }
.inner .search { padding: 0 0 2px 9px; gap: 10px; border-left: 0; border-right: 0; }
.parrot { margin-left: 43px; align-self: flex-start; height: 33px; margin-top: -1px; }
.app { height: 100%; display: grid; place-items: center; width: 34px; box-shadow: inset 0 -2px #76b9ed; }
.inner .app { padding-bottom: 2px; }
.inner .app.on { width: 40px; background: #5b6c74; }
.outer .app { width: 40px; box-shadow: inset 0 -3px #76b9ed; }
.outer .app.on { width: 48px; background: #4d6067; }
.weather { justify-self: start; padding-left: 2px; }
.inner .weather { letter-spacing: -.36px; }
.outer .weather { padding-left: 9px; }
.outer .eng { font-size: 12px; }
.inner .eng { font-size: 10.500px; }
.clock { display: grid; justify-items: center; font-size: 12px; line-height: 18px; letter-spacing: -.3px; }
.inner .clock { font-size: 10.200px; line-height: 15px; margin-bottom: 4px; }
.notif { position: relative; margin-right: 3px; }
.badge { position: absolute; left: 7px; top: 7px; width: 17px; height: 17px; border-radius: 50%; background: #333b45; border: 1px solid #8a929a; font-size: 11px; line-height: 15px; text-align: center; }
.peek { width: 1px; height: 100%; background: #5b6779; }
.outer .peek { justify-self: start; margin-left: 4px; }
```
